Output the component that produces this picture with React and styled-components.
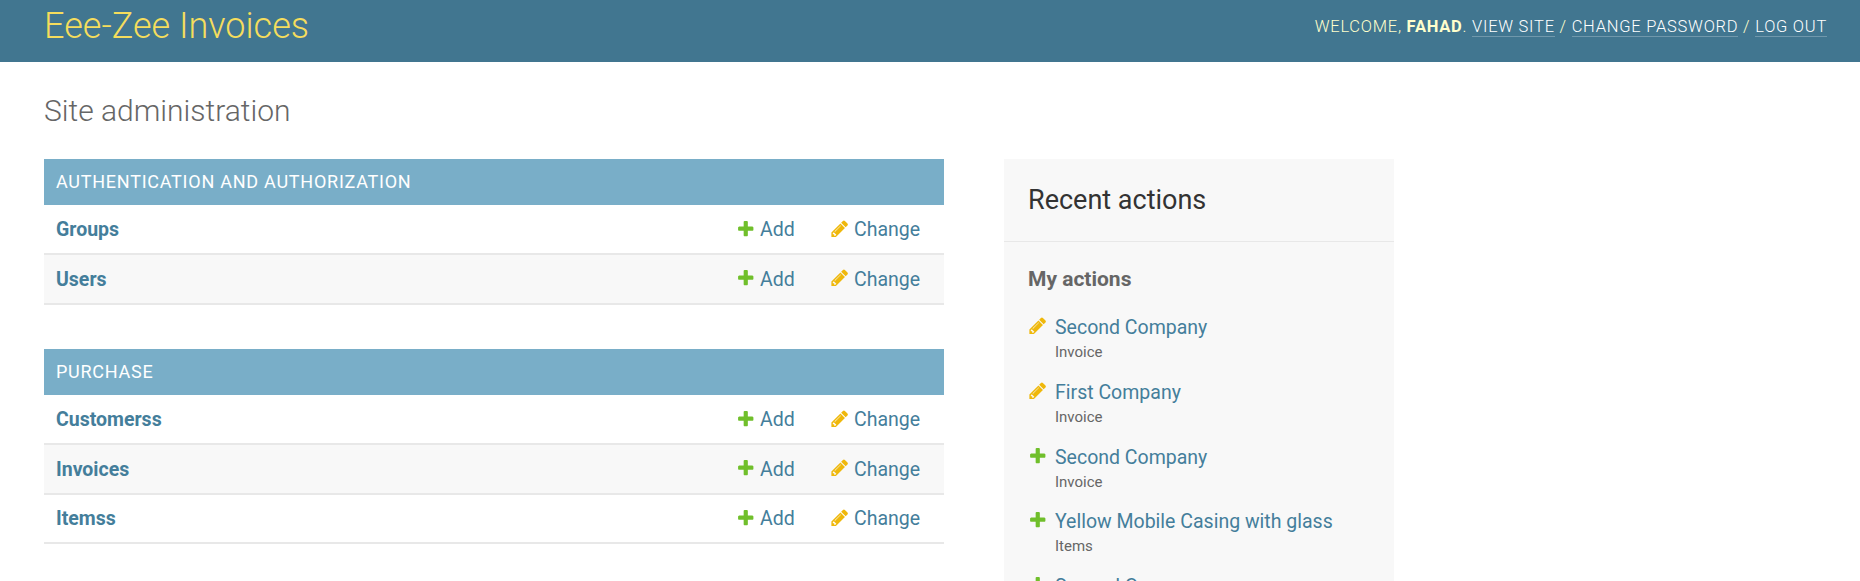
import React from "react";
import styled, { createGlobalStyle } from "styled-components";

const Global = createGlobalStyle`
  html, body { margin: 0; padding: 0; height: 100%; overflow: hidden; background: #fff; }
  body { font-family: Roboto, "Liberation Sans", sans-serif; color: #333; }
  a { text-decoration: none; }
`;

const Page = styled.div`height: 581px; overflow: hidden;`;

const Header = styled.header`
  height: 62px;
  box-sizing: border-box;
  padding: 0 33px 0 44px;
  background: #417690;
  display: flex;
  justify-content: space-between;
  align-items: flex-start;
`;
const Brand = styled.h1`
  margin: 6px 0 0;
  font-size: 36px;
  line-height: 40px;
  font-weight: 300;
  color: #f5dd5d;
`;
const UserTools = styled.div`
  margin-top: 17px;
  font-size: 16.5px;
  line-height: 20px;
  font-weight: 300;
  letter-spacing: 0.75px;
  text-transform: uppercase;
  color: #ffc;
  strong { font-weight: 700; }
`;
const ToolLink = styled.a`
  color: #fff;
  border-bottom: 1.5px solid rgba(255, 255, 255, 0.25);
`;

const Content = styled.main`padding: 0 0 0 44px;`;
const Title = styled.h2`
  margin: 0;
  padding-top: 31px;
  height: 97px;
  box-sizing: border-box;
  font-size: 30px;
  line-height: 36px;
  font-weight: 300;
  color: #666;
`;
const Columns = styled.div`
  display: grid;
  grid-template-columns: 900px 390px;
  column-gap: 60px;
  align-items: start;
`;
const Module = styled.section`
  margin-bottom: 44.5px;
`;
const Caption = styled.div`
  height: 46px;
  box-sizing: border-box;
  padding: 0 12px 2px;
  display: flex;
  align-items: center;
  background: #79aec8;
  color: #fff;
  font-size: 18px;
  letter-spacing: 0.75px;
  text-transform: uppercase;
`;
const Row = styled.div`
  height: 49.75px;
  box-sizing: border-box;
  padding: 1px 22px 0 12px;
  display: flex;
  align-items: center;
  border-bottom: 2px solid #e8e8e8;
  background: ${(p) => (p.$alt ? "#f8f8f8" : "#fff")};
`;
const ModelName = styled.a`
  flex: 1;
  color: #447e9b;
  font-size: 19.5px;
  font-weight: 700;
`;
const RowAction = styled.a`
  display: flex;
  align-items: center;
  width: ${(p) => p.$w}px;
  color: #447e9b;
  font-size: 19.5px;
  svg { margin: -2px 4.5px 0 0; flex: none; }
`;

const Sidebar = styled.aside`background: #f8f8f8;`;
const SideHead = styled.h3`
  margin: 0;
  height: 83px;
  box-sizing: border-box;
  padding: 0 24px;
  display: flex;
  align-items: center;
  border-bottom: 1.5px solid #e8e8e8;
  font-size: 27px;
  font-weight: 400;
  color: #333;
`;
const SideBody = styled.div`padding: 25px 24px 0;`;
const SubHead = styled.h4`
  margin: 0 0 25px;
  font-size: 21px;
  line-height: 24px;
  font-weight: 700;
  color: #666;
`;
const ActionList = styled.ul`list-style: none; margin: 0; padding: 0;`;
const ActionItem = styled.li`
  display: grid;
  grid-template-columns: 27px 1fr;
  height: 64.8px;
  align-content: start;
`;
const IconCell = styled.span`display: block;`;
const ActionLink = styled.a`
  color: #447e9b;
  font-size: 19.5px;
  line-height: 24px;
`;
const ActionType = styled.span`
  grid-column: 2;
  margin-top: 3px;
  font-size: 15px;
  line-height: 18.5px;
  color: #666;
`;

const Plus = ({ size = 19.5 }) => (
  <svg width={size} height={size} viewBox="0 0 1792 1792">
    <path fill="#70bf2b" d="M1600 796v192q0 40-28 68t-68 28h-416v416q0 40-28 68t-68 28h-192q-40 0-68-28t-28-68v-416h-416q-40 0-68-28t-28-68v-192q0-40 28-68t68-28h416v-416q0-40 28-68t68-28h192q40 0 68 28t28 68v416h416q40 0 68 28t28 68z" />
  </svg>
);
const Pencil = ({ size = 19.5 }) => (
  <svg width={size} height={size} viewBox="0 0 1792 1792">
    <path fill="#efb80b" d="M491 1536l91-91-235-235-91 91v107h128v128h107zm523-928q0-22-22-22-10 0-17 7l-542 542q-7 7-7 17 0 22 22 22 10 0 17-7l542-542q7-7 7-17zm-54-192l416 416-832 832h-416v-416zm683 96q0 53-37 90l-166 166-416-416 166-165q36-38 90-38 53 0 91 38l235 234q37 39 37 91z" />
  </svg>
);

const modules = [
  { caption: "Authentication and Authorization", models: ["Groups", "Users"] },
  { caption: "Purchase", models: ["Customerss", "Invoices", "Itemss"] },
];
const actions = [
  ["edit", "Second Company", "Invoice"],
  ["edit", "First Company", "Invoice"],
  ["add", "Second Company", "Invoice"],
  ["add", "Yellow Mobile Casing with glass", "Items"],
  ["add", "Second Company", "Invoice"],
];

export default function App() {
  return (
    <Page>
      <Global />
      <Header>
        <Brand>Eee-Zee Invoices</Brand>
        <UserTools>
          Welcome, <strong>Fahad</strong>. <ToolLink href="#">View site</ToolLink> / <ToolLink href="#">Change password</ToolLink> / <ToolLink href="#">Log out</ToolLink>
        </UserTools>
      </Header>
      <Content>
        <Title>Site administration</Title>
        <Columns>
          <div>
            {modules.map((m) => (
              <Module key={m.caption}>
                <Caption>{m.caption}</Caption>
                {m.models.map((name, i) => (
                  <Row key={name} $alt={i % 2 === 1}>
                    <ModelName href="#">{name}</ModelName>
                    <RowAction href="#" $w={94}><Plus />Add</RowAction>
                    <RowAction href="#" $w={92}><Pencil />Change</RowAction>
                  </Row>
                ))}
              </Module>
            ))}
          </div>
          <Sidebar>
            <SideHead>Recent actions</SideHead>
            <SideBody>
              <SubHead>My actions</SubHead>
              <ActionList>
                {actions.map(([kind, name, type], i) => (
                  <ActionItem key={i}>
                    <IconCell>{kind === "edit" ? <Pencil /> : <Plus />}</IconCell>
                    <ActionLink href="#">{name}</ActionLink>
                    <ActionType>{type}</ActionType>
                  </ActionItem>
                ))}
              </ActionList>
            </SideBody>
          </Sidebar>
        </Columns>
      </Content>
    </Page>
  );
}
